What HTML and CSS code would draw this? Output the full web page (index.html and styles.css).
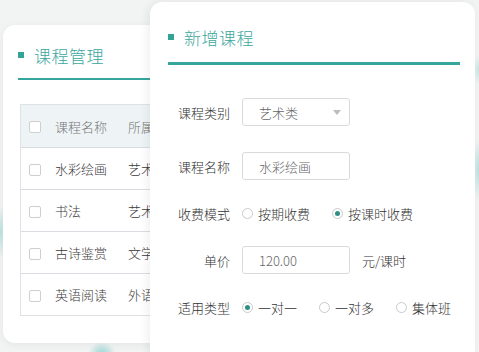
FILE: index.html
```html
<!DOCTYPE html>
<html lang="zh-CN">
<head>
<meta charset="utf-8">
<title>课程管理</title>
<link rel="stylesheet" href="styles.css">
</head>
<body>
<div class="stage">
  <section class="card list-card">
    <h2 class="card-title"><span class="marker"></span>课程管理</h2>
    <div class="table">
      <div class="tr th">
        <span class="cb"></span><span class="c1">课程名称</span><span class="c2">所属分类</span>
      </div>
      <div class="tr">
        <span class="cb"></span><span class="c1">水彩绘画</span><span class="c2">艺术类</span>
      </div>
      <div class="tr">
        <span class="cb"></span><span class="c1">书法</span><span class="c2">艺术类</span>
      </div>
      <div class="tr">
        <span class="cb"></span><span class="c1">古诗鉴赏</span><span class="c2">文学类</span>
      </div>
      <div class="tr last">
        <span class="cb"></span><span class="c1">英语阅读</span><span class="c2">外语类</span>
      </div>
    </div>
  </section>

  <section class="card form-card">
    <h2 class="card-title thick"><span class="marker"></span>新增课程</h2>
    <div class="form">
      <div class="row first">
        <label class="lbl">课程类别</label>
        <div class="field select"><span>艺术类</span><span class="caret"></span></div>
      </div>
      <div class="row">
        <label class="lbl">课程名称</label>
        <div class="field">水彩绘画</div>
      </div>
      <div class="row">
        <label class="lbl">收费模式</label>
        <div class="radios">
          <span class="opt"><span class="radio"></span>按期收费</span>
          <span class="opt"><span class="radio on"></span>按课时收费</span>
        </div>
      </div>
      <div class="row">
        <label class="lbl">单价</label>
        <div class="field">120.00</div>
        <span class="unit">元/课时</span>
      </div>
      <div class="row">
        <label class="lbl">适用类型</label>
        <div class="radios">
          <span class="opt"><span class="radio on"></span>一对一</span>
          <span class="opt"><span class="radio"></span>一对多</span>
          <span class="opt"><span class="radio"></span>集体班</span>
        </div>
      </div>
    </div>
  </section>
</div>
</body>
</html>
```

FILE: styles.css
```css
* { box-sizing: border-box; }
html, body { margin: 0; padding: 0; }
body {
  width: 479px;
  height: 352px;
  overflow: hidden;
  font-family: "Noto Sans CJK SC", "Noto Sans", sans-serif;
  font-weight: 300;
  color: #333;
  background-color: #f2f3f3;
  background-image:
    radial-gradient(ellipse 10px 26px at 0px 232px, rgba(120, 205, 200, 0.45), rgba(120, 205, 200, 0) 100%),
    radial-gradient(ellipse 14px 12px at 102px 354px, rgba(90, 195, 190, 0.6), rgba(90, 195, 190, 0) 100%),
    radial-gradient(ellipse 8px 30px at 479px 170px, rgba(120, 205, 200, 0.45), rgba(120, 205, 200, 0) 100%),
    radial-gradient(ellipse 6px 14px at 479px 70px, rgba(120, 205, 200, 0.35), rgba(120, 205, 200, 0) 100%);
}

.stage {
  display: grid;
  grid-template-columns: 3px 147px 60px 265px 4px;
  grid-template-rows: 2px 23px 340px;
}

.card {
  background: #fff;
  border-radius: 12px;
}

.list-card {
  grid-column: 2 / 4;
  grid-row: 3;
  height: 318px;
  padding: 18px 0 0 15px;
  box-shadow: 0 2px 8px rgba(0, 0, 0, 0.06);
}

.form-card {
  grid-column: 3 / 5;
  grid-row: 2 / 4;
  height: 360px;
  padding: 23px 15px 0 18px;
  z-index: 1;
  box-shadow: -2px 0 10px rgba(0, 0, 0, 0.07);
}

.card-title {
  margin: 0;
  display: flex;
  align-items: center;
  height: 24px;
  font-size: 17px;
  font-weight: 300;
  color: #3ba79e;
  letter-spacing: 0.5px;
  border-bottom: 2px solid #36a69c;
  box-sizing: content-box;
  padding-bottom: 11px;
}
.card-title.thick {
  border-bottom-width: 3px;
  padding-bottom: 13px;
}
.marker {
  width: 6px;
  height: 6px;
  background: #33a398;
  margin-right: 10px;
}

/* table */
.table {
  margin: 24px 0 0 2px;
  width: 220px;
  border: 1px solid #e0e3e6;
  border-right: 0;
  font-size: 13px;
}
.tr {
  display: flex;
  align-items: center;
  height: 42px;
  border-bottom: 1px solid #d9dde2;
  color: #3a3a3a;
}
.tr.last { height: 41px; border-bottom: 0; }
.tr.th {
  background: #eef4f6;
  color: #777;
  height: 43px;
}
.cb {
  width: 12px;
  height: 12px;
  border: 1px solid #cfcfcf;
  border-radius: 2px;
  background: #fff;
  margin: 2px 0 0 8px;
  flex: none;
}
.c1 { margin-left: 14px; width: 73px; }
.c2 { white-space: nowrap; }

/* form */
.form {
  display: flex;
  flex-direction: column;
  gap: 19px;
  margin-top: 33px;
  font-size: 13px;
}
.row {
  display: flex;
  align-items: center;
  height: 28px;
}
.row.first { margin-bottom: 7px; }
.lbl {
  width: 62px;
  text-align: right;
  color: #333;
  margin-right: 12px;
  flex: none;
}
.field {
  width: 108px;
  height: 28px;
  border: 1px solid #d8dbde;
  border-radius: 3px;
  padding-left: 16px;
  display: flex;
  align-items: center;
  color: #666;
}
.select {
  justify-content: space-between;
  padding-right: 8px;
}
.caret {
  width: 0;
  height: 0;
  border-left: 4px solid transparent;
  border-right: 4px solid transparent;
  border-top: 5px solid #bdbdbd;
}
.unit { margin-left: 12px; color: #333; }

.radios {
  display: flex;
  gap: 22px;
  color: #333;
}
.opt {
  display: flex;
  align-items: center;
}
.radio {
  width: 11px;
  height: 11px;
  border: 1px solid #cacaca;
  border-radius: 50%;
  margin-right: 5px;
  display: flex;
  align-items: center;
  justify-content: center;
  background: #fff;
}
.radio.on::after {
  content: "";
  width: 5px;
  height: 5px;
  border-radius: 50%;
  background: #2f8f87;
}
```
